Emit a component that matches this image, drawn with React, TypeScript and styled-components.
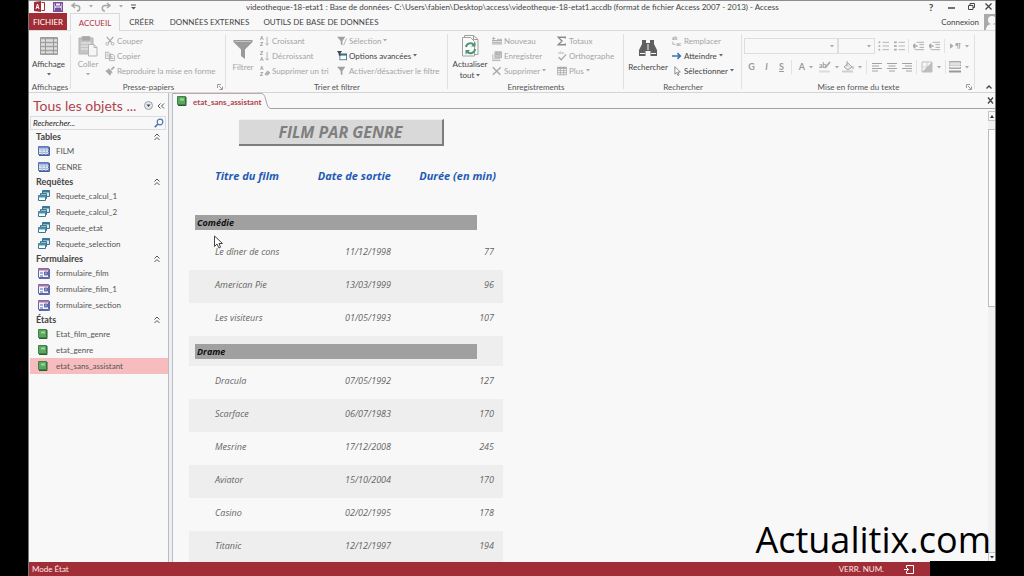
import React from "react";
import styled, { createGlobalStyle, css } from "styled-components";

const Global = createGlobalStyle`
  *, *::before, *::after { box-sizing: border-box; }
  body { margin: 0; background: #000; overflow: hidden; font-family: Lato, "Open Sans", sans-serif; font-size: 8px; line-height: 12px; color: #444; }
  button, input, select { font: inherit; color: inherit; background: none; border: 0; padding: 0; margin: 0; }
  ul, h1, h2 { margin: 0; padding: 0; list-style: none; font-weight: 400; }
  svg { display: block; flex: none; }
`;

const RED = "#a12d37";

const Screen = styled.div`
  position: relative;
  height: 100vh;
  display: flex;
  flex-direction: column;
  padding: 0 29px;
  background: #000;
`;

const Window = styled.div`
  flex: 1;
  min-height: 0;
  display: flex;
  flex-direction: column;
  background: #f8f8f8;
  border-top: 1px solid #8e8e8e;
  box-shadow: -1px 0 0 #777, 1px 0 0 #777;
`;

/* Title bar */
const TitleBar = styled.header`
  display: flex;
  height: 11px;
  align-items: center;
`;
const QuickAccess = styled.div`
  flex: 0 0 217px;
  display: flex;
  align-items: center;
  gap: 8px;
  padding-left: 5px;
`;
const WindowTitle = styled.h1`
  font-size: 8px;
  line-height: 10px;
  white-space: nowrap;
`;
const WindowButtons = styled.div`
  margin-left: auto;
  display: flex;
  align-items: center;
`;
const CaptionButton = styled.button`
  width: 20px;
  height: 11px;
  display: flex;
  align-items: center;
  justify-content: center;
  font-size: 10px;
  line-height: 10px;
  font-weight: 700;
  &:last-child { width: 14px; }
`;

/* Ribbon tabs */
const TabStrip = styled.nav`
  display: flex;
  height: 18px;
  padding-top: 1px;
  font-size: 8px;
`;
const RibbonTab = styled.button<{ $kind?: "file" | "active"; $width: number }>`
  flex: 0 0 ${(p) => p.$width}px;
  height: 17px;
  white-space: nowrap;
  ${(p) => p.$kind === "file" && css`background: ${RED}; color: #fff; margin-right: 3px;`}
  ${(p) =>
    p.$kind === "active" &&
    css`
      height: 18px;
      position: relative;
      background: #f8f8f8;
      color: #b0353f;
      border: 1px solid #d9d9d9;
      border-bottom: 0;
    `}
`;
const Account = styled.div`
  margin-left: auto;
  display: flex;
  align-items: center;
  gap: 5px;
`;
const Avatar = styled.span`
  width: 11px;
  height: 16px;
  background: #a9a9a9;
  overflow: hidden;
`;

/* Ribbon */
const Ribbon = styled.div`
  flex: none;
  display: flex;
  height: 63px;
  border-top: 1px solid #dcdcdc;
  border-bottom: 1px solid #d4d4d4;
`;
const Group = styled.section<{ $width: number }>`
  flex: 0 0 ${(p) => p.$width}px;
  display: flex;
  flex-direction: column;
  padding-top: 2px;
  position: relative;
  &::after {
    content: "";
    position: absolute;
    right: 0;
    top: 3px;
    bottom: 3px;
    border-right: 1px solid #e0e0e0;
  }
`;
const GroupBody = styled.div`
  flex: 1;
  display: flex;
  white-space: nowrap;
`;
const GroupLabel = styled.div`
  display: flex;
  justify-content: center;
  height: 11px;
  color: #555;
`;
const Launcher = styled.button`
  position: absolute;
  right: 3px;
  bottom: 2px;
`;
const BigButton = styled.button<{ $width: number; $dim?: boolean }>`
  flex: 0 0 ${(p) => p.$width}px;
  display: flex;
  flex-direction: column;
  align-items: center;
  padding-top: 2px;
  color: ${(p) => (p.$dim ? "#a4a4a4" : "#444")};
  line-height: 11px;
  & > svg:first-child { height: 22px; margin-bottom: 2px; }
  & > svg:last-child { margin-top: 3px; }
`;
const InlineLabel = styled.span`
  display: flex;
  align-items: center;
  gap: 2px;
`;
const Column = styled.div<{ $width: number }>`
  flex: 0 0 ${(p) => p.$width}px;
  display: flex;
  flex-direction: column;
`;
const SmallButton = styled.button<{ $dim?: boolean }>`
  display: flex;
  align-items: center;
  gap: 2px;
  height: 15px;
  color: ${(p) => (p.$dim ? "#a4a4a4" : "#444")};
  & > svg:first-child { width: 10px; height: 12px; }
`;
const FormatBody = styled.div`
  flex: 1;
  display: flex;
  flex-direction: column;
  gap: 5px;
  padding: 5px 0 0 2px;
`;
const FormatRow = styled.div`
  display: flex;
  align-items: center;
  height: 16px;
  color: #9b9b9b;
`;
const Combo = styled.div<{ $width: number }>`
  flex: 0 0 ${(p) => p.$width}px;
  display: flex;
  align-items: center;
  height: 16px;
  padding-right: 3px;
  border: 1px solid #dedede;
  select { flex: 1; width: 0; appearance: none; opacity: 1; }
`;
const Tool = styled.button<{ $width: number }>`
  flex: 0 0 ${(p) => p.$width}px;
  display: flex;
  align-items: center;
  justify-content: center;
  gap: 4px;
  font-size: 9px;
  font-weight: 700;
`;
const Divider = styled.i<{ $gap: number }>`
  width: 1px;
  height: 14px;
  margin: 0 ${(p) => p.$gap}px;
  background: #e2e2e2;
`;
const Collapse = styled.button`
  margin-left: auto;
  align-self: flex-end;
  padding: 0 3px 3px 0;
`;

/* Work area */
const Work = styled.main`
  flex: 1;
  display: flex;
  min-height: 0;
`;
const NavPane = styled.aside`
  flex: 0 0 139px;
  min-width: 0;
  display: flex;
  flex-direction: column;
`;
const NavTitle = styled.div`
  display: flex;
  align-items: center;
  height: 23px;
  padding: 2px 3px 0 4px;
  gap: 4px;
  h2 { flex: 1; min-width: 0; font-size: 14px; line-height: 20px; color: #b0444e; white-space: nowrap; }
`;
const SearchBox = styled.label`
  display: flex;
  align-items: center;
  height: 14px;
  margin: 0 2px 0 1px;
  border: 1px solid #d8dde4;
  input { flex: 1; width: 0; height: 12px; padding-left: 2px; font-style: italic; outline: 0; }
  input::placeholder { color: #222; opacity: 1; }
  svg { margin-right: 1px; }
`;
const NavHeading = styled.button`
  display: flex;
  width: 100%;
  height: 13px;
  align-items: center;
  justify-content: space-between;
  padding: 0 8px 0 7px;
  font-size: 9px;
  font-weight: 700;
`;
const NavItem = styled.a<{ $selected?: boolean }>`
  display: flex;
  align-items: center;
  height: 16px;
  gap: 6px;
  padding-left: 8px;
  margin-left: 1px;
  color: #555;
  text-decoration: none;
  background: ${(p) => (p.$selected ? "#f7bcbe" : "transparent")};
`;
const Splitter = styled.div`
  flex: 0 0 5px;
  border: solid #b9bcc3;
  border-width: 0 1px;
  background: #eceef2;
`;
const Documents = styled.div`
  flex: 1;
  min-width: 0;
  display: flex;
  flex-direction: column;
`;
const DocTabs = styled.div`
  flex: none;
  display: flex;
  height: 16px;
`;
const DocTab = styled.button`
  display: flex;
  align-items: center;
  gap: 4px;
  padding-left: 4px;
  border-top: 1px solid #b9aca4;
  font-weight: 700;
  color: #b0444e;
`;
const TabRest = styled.div`
  flex: 1;
  display: flex;
  align-items: center;
  justify-content: flex-end;
  border-bottom: 1px solid #a8a29e;
`;
const Viewport = styled.div`
  flex: 1;
  display: flex;
  min-height: 0;
  overflow: hidden;
`;
const Report = styled.article`
  flex: 1;
  padding: 10px 0 0 16px;
  font-family: "Open Sans", "Noto Sans", sans-serif;
  font-style: italic;
`;
const ReportTitle = styled.h2`
  width: 205px;
  height: 27px;
  margin-left: 50px;
  background: #d9d9d9;
  border: solid #7d7d7d;
  border-width: 0 2px 2px 0;
  border-top: 1px solid #f0f0f0;
  font-size: 16px;
  line-height: 24px;
  font-weight: 700;
  text-align: center;
  color: #7f7f7f;
`;
const ReportTable = styled.table`
  width: 314px;
  table-layout: fixed;
  border-collapse: collapse;
  font-size: 9px;
  color: #666;
  th, td { padding: 0 0 4px; text-align: right; font-weight: 400; white-space: nowrap; }
  th:first-child, td:first-child { text-align: left; padding-left: 26px; }
  td:last-child { padding-right: 9px; }
  thead th { height: 61px; padding-bottom: 2px; font-size: 11px; font-weight: 700; color: #1f5bb5; }
  thead th:last-child { padding-right: 7px; }
`;
const FilmRow = styled.tr<{ $shaded: boolean }>`
  height: 33px;
  background: ${(p) => (p.$shaded ? "#eeeeee" : "transparent")};
`;
const GenreRow = styled.tr<{ $shaded: boolean }>`
  height: 30px;
  background: ${(p) => (p.$shaded ? "#eeeeee" : "transparent")};
  && th { padding: 0 26px 0 6px; }
`;
const GenreBar = styled.div`
  height: 15px;
  padding-left: 2px;
  background: #a0a0a0;
  font-size: 9px;
  line-height: 15px;
  font-weight: 700;
  color: #111;
`;
const ScrollBar = styled.div`
  flex: 0 0 7px;
  display: flex;
  flex-direction: column;
  align-items: stretch;
  margin-top: 2px;
  background: #f1f1f1;
`;
const ScrollButton = styled.button`
  flex: none;
  height: 10px;
  display: flex;
  align-items: center;
  justify-content: center;
  border: 1px solid #c4c4c4;
  border-right: 0;
  background: #f8f8f8;
`;
const ScrollTrack = styled.div`
  flex: 1;
  padding-top: 8px;
`;
const ScrollThumb = styled.div`
  height: 42%;
  border: 1px solid #bcbcbc;
  border-right: 0;
  background: #fdfdfd;
`;

/* Status bar */
const StatusBar = styled.footer`
  flex: none;
  display: flex;
  height: 14px;
  align-items: center;
  padding-left: 3px;
  background: ${RED};
  color: #fbe9ea;
`;
const StatusRight = styled.div`
  margin-left: auto;
  display: flex;
  align-items: center;
  gap: 20px;
  padding-right: 16px;
`;
const Cover = styled.div`
  flex: 0 0 66px;
  margin: -1px -1px 0 0;
  align-self: stretch;
  background: #000;
`;

const Watermark = styled.div`
  position: absolute;
  right: 33px;
  bottom: 11px;
  font-family: "Open Sans", "Noto Sans", sans-serif;
  font-size: 36px;
  line-height: 50px;
  color: #000;
`;
const Pointer = styled.svg`
  position: absolute;
  left: 214px;
  top: 235px;
`;

/* Icons */
const S = (p: { w?: number; h?: number; vb?: string; children: React.ReactNode; c?: string }) => (
  <svg width={p.w ?? 12} height={p.h ?? 12} viewBox={p.vb ?? "0 0 12 12"} fill="none" stroke={p.c ?? "#a8a8a8"} strokeWidth="1" aria-hidden="true">
    {p.children}
  </svg>
);
const Arrow = ({ c = "#666" }: { c?: string }) => (
  <svg width="4" height="3" viewBox="0 0 4 3" fill={c} aria-hidden="true"><path d="M0 0h4L2 2.5z" /></svg>
);
const Cut = () => <S><path d="M2 1l6 7M10 1L4 8" strokeWidth="1.4" /><circle cx="2.8" cy="9.4" r="1.6" /><circle cx="9.2" cy="9.4" r="1.6" /></S>;
const Copy = () => <S><path d="M.5 1.500h4l2 2v5.500h-6zM5.500 4h4l2 2v5.500h-6z" fill="#f4f4f4" /><path d="M2 4h2M2 6h3M7 7h2M7 9h3" /></S>;
const Brush = () => <S><path d="M11 1L7.500 4.500" strokeWidth="2" /><path d="M4 3l5 5M1 6l4-2 3 3-2 4z" fill="#a8a8a8" /></S>;
const Sort = ({ a, b, erase }: { a: string; b: string; erase?: boolean }) => (
  <S>
    <g fill="#8f8f8f" stroke="none" fontSize="6" fontWeight="700"><text x="0" y="5">{a}</text><text x="0" y="12">{b}</text></g>
    {erase ? <path d="M6 10l3-4 3 2-3 3z" fill="#b5b5b5" /> : <path d="M8.500 1v10M6.500 9l2 2 2-2" />}
  </S>
);
const FunnelSmall = ({ bolt }: { bolt?: boolean }) => (
  <S><path d="M0 1h10L6.500 6v5l-2-1V6z" fill="#a0a0a0" stroke="none" />{bolt && <path d="M11.500 3L8 11" />}</S>
);
const Options = () => (
  <S c="#3f6f8c"><rect x="3.500" y="3.500" width="8" height="7" fill="#fff" /><path d="M3 4.500h9" strokeWidth="2" /><path d="M0 0h6L4 3v3L2 5V3z" fill="#444" stroke="none" /></S>
);
const NewRec = () => <S><path d="M0 5.500h12M0 7.500h12M0 9.500h12" strokeWidth="1.200" /><path d="M2 1v4M0 3h4" /><path d="M6 4h6" /></S>;
const SaveRec = () => <S><path d="M3.500 1h8v7h-8z" fill="#c6c6c6" /><path d="M5.500 1v3h4V1M0 9.500h10M0 11.500h10" /><path d="M1 4v4" /></S>;
const DeleteX = () => <S><path d="M1 1.500l9 9M10.500 1.500l-9.500 9" strokeWidth="1.700" /></S>;
const Sigma = () => <S c="#8c8c8c"><path d="M10 3V1.500H1.500L6 6l-4.500 4.500H10V9" strokeWidth="1.600" /></S>;
const Spell = () => <S><g fill="#a8a8a8" stroke="none" fontSize="5"><text x="1" y="4">abc</text></g><path d="M2 7.500l3 3 6-6.500" strokeWidth="1.600" /></S>;
const MoreGrid = () => <S><path d="M.5 1.500h11v9H.5z" /><path d="M.5 2.500h11" strokeWidth="2" /><path d="M.5 5.500h11M.5 8h11M4 1v10M8 1v10" /></S>;
const Replace = () => <S><g fill="#a0a0a0" stroke="none" fontSize="6" fontWeight="700"><text x="0" y="5">ab</text><text x="5" y="11.500">ac</text></g><path d="M1 7v3h3" /></S>;
const GoTo = () => <S c="#3c73b5"><path d="M0 6h10M6.500 2.500L10 6l-3.500 3.500" strokeWidth="1.900" /></S>;
const SelectCursor = () => <S c="#777"><path d="M3.500.8v9l2-2 1.500 3.500 1.500-.7L7 7.300h3z" fill="#fff" /></S>;

const ViewIcon = () => (
  <S w={18} h={20} vb="0 0 18 20" c="#9a9a9a">
    <path d="M.5 1.500h17v17H.5z" fill="#dedede" />
    <path d="M1 2.500h16M1 6.500h16M1 10.500h16M1 14.500h16M1 18h16" strokeWidth="1.500" stroke="#a2a2a2" /><path d="M5.500 1v18M13.500 1v18" />
  </S>
);
const PasteIcon = () => (
  <S w={20} h={22} vb="0 0 20 22" c="#b4b4b4">
    <path d="M1 3h14v16H1z" fill="#c4c4c4" /><path d="M4 1.500h8v4H4z" fill="#a8a8a8" /><path d="M3 8h10M3 11h7M3 14h7" stroke="#eee" />
    <path d="M10.500 9.500h5.500l3 3v8.500h-8.500z" fill="#f6f6f6" /><path d="M16 9.500v3h3" />
  </S>
);
const FilterIcon = () => (
  <S w={20} h={22} vb="0 0 20 22"><path d="M.5 2h19v2L12 11.500V21l-4-3v-6.500L.5 4z" fill="#9a9a9a" stroke="none" /><path d="M2 3.500h16" stroke="#c4c4c4" /></S>
);
const RefreshIcon = () => (
  <S w={18} h={22} vb="0 0 18 22" c="#a0a0a0">
    <path d="M3.500 3.500V.5h9l4.500 4v15h-3" /><path d="M1.500 2.500h8l4 4v14.500h-12z" fill="#fbfbfb" /><path d="M12.500.5v4H17" />
    <g stroke="#4c9474" strokeWidth="2"><path d="M5 12a4.500 4.500 0 0 1 8-2M14 14a4.500 4.500 0 0 1-8 2.500" /></g>
    <path d="M14.500 7v4.500H10zM4.500 19.500V15H9z" fill="#4c9474" stroke="none" />
  </S>
);
const Binoculars = () => (
  <S w={20} h={20} vb="0 0 20 20"><path d="M4 1h4v3h4V1h4v4l3 6v6h-6.500v-5h-5v5H1v-6l3-6z" fill="#5f5f5f" stroke="none" /><path d="M2 14.500h5M13 14.500h5M10 5v6" stroke="#f8f8f8" /></S>
);

const Bullets = ({ round }: { round?: boolean }) => (
  <S w={11} h={12}><path d="M5 2h7M5 6h7M5 10h7" stroke="#b0b0b0" /><g fill="#b0b0b0" stroke="none">{round ? [2, 6, 10].map((y) => <circle key={y} cx="1.500" cy={y} r="1.100" />) : [2, 6, 10].map((y) => <path key={y} d={`M0 ${y - 1}h3v2H0z`} />)}</g></S>
);
const Indent = () => <S w={11}><path d="M0 6h5M2.500 3.500L0 6l2.500 2.500" strokeWidth="1.600" /><path d="M4 2h8M7 4.500h5M7 7.500h5M2 10h10" /></S>;
const Direction = () => <S w={11}><path d="M0 3v6l4-3z" fill="#aaa" stroke="none" /><path d="M8.500 3v6M10.500 3v6M6.500 3.500h5" /><path d="M6 3h2.500v3H6z" fill="#aaa" stroke="none" /></S>;
const Align = ({ kind }: { kind: "l" | "c" | "r" }) => (
  <S w={10} h={10} vb="0 0 10 10" c="#a3a3a3">
    <path d={{ l: "M0 1.500h10M0 4h7M0 6.500h10M0 9h6", c: "M0 1.500h10M1.500 4h7M0 6.500h10M2 9h6", r: "M0 1.500h10M3 4h7M0 6.500h10M4 9h6" }[kind]} />
  </S>
);
const Marker = () => <S><text x="0" y="7" fontSize="7" fontWeight="700" fill="#999" stroke="none">ab</text><path d="M11 1L6 7" strokeWidth="1.800" /><path d="M0 10.500h11" strokeWidth="2" stroke="#ddd" /></S>;
const Bucket = () => <S><path d="M2 6l4-4 4 4-4 3z" fill="#e6e6e6" /><path d="M5 0v5M11 5v3" /><path d="M0 10.500h11" strokeWidth="2" stroke="#cfcfcf" /></S>;
const BgShape = () => <S><path d="M1 1h10v10H1z" stroke="#c0c0c0" /><path d="M1 6h10M6 1v10" stroke="#d0d0d0" /><path d="M1 11L11 1v10z" fill="#bdbdbd" stroke="none" /></S>;
const AltRow = () => <S><path d="M.5.5h11v7H.5z" fill="#d2d2d2" /><path d="M0 3h12M0 5.500h12" stroke="#eee" /><path d="M0 10.500h12" strokeWidth="2" stroke="#999" /></S>;

const LaunchIcon = () => <S w={6} h={6} vb="0 0 6 6" c="#999"><path d="M.5 4V.5H4M2 2l3 3M5.500 2.500v3h-3" /></S>;
const Chevrons = () => <S w={6} h={8} vb="0 0 6 8" c="#555"><path d="M.5 3.500L3 1l2.500 2.500M.5 7L3 4.500 5.500 7" /></S>;

type Kind = "table" | "query" | "form" | "report";
const ObjectIcon = ({ kind }: { kind: Kind }) => {
  if (kind === "table")
    return <S w={12} h={10} vb="0 0 12 10" c="#5470ad"><path d="M.5.5h10v8H.5z" fill="#e3ebf8" /><path d="M.5 1.500h10" strokeWidth="2" stroke="#6f8ac4" /><path d="M1 4h10M1 6.500h10M4 2v7M7.500 2v7" stroke="#a9bce0" /><path d="M11.500 1v8.500H1" stroke="#4a5f96" /></S>;
  if (kind === "query")
    return <S c="#3c7894"><path d="M4.500.5h7v6h-7z" fill="#d5eaf3" /><path d="M4.500 1.500h7" strokeWidth="2" /><path d="M2.500 3.500h6v5h-6z" fill="#9fb7c6" /><path d="M.5 5.500h7v5h-7z" fill="#fff" /><path d="M.5 6.500h7" strokeWidth="2" stroke="#4796ad" /></S>;
  if (kind === "form")
    return <S w={12} h={11} vb="0 0 12 11" c="#5d66a8"><path d="M.5.500h10v9h-10z" fill="#f2f3fb" /><path d="M0 1.500h11" strokeWidth="2" stroke="#b0709b" /><path d="M2 5h3" /><path d="M6.500 4h3v3h-3z" fill="#8e99d0" /><path d="M2 8h3M11.500 1v9.500H1" /></S>;
  return <S w={12} h={11} vb="0 0 12 11" c="#3d8344"><path d="M.5.5h8v8h-8z" fill="#5aa85d" /><path d="M3 2.500h4v2H3z" fill="#a5d3a1" stroke="none" /><path d="M9 1v8.500H1" stroke="#2c5a33" /></S>;
};

const navigation: { title: string; kind: Kind; items: string[] }[] = [
  { title: "Tables", kind: "table", items: ["FILM", "GENRE"] },
  { title: "Requêtes", kind: "query", items: ["Requete_calcul_1", "Requete_calcul_2", "Requete_etat", "Requete_selection"] },
  { title: "Formulaires", kind: "form", items: ["formulaire_film", "formulaire_film_1", "formulaire_section"] },
  { title: "États", kind: "report", items: ["Etat_film_genre", "etat_genre", "etat_sans_assistant"] },
];

const genres = [
  {
    name: "Comédie",
    shaded: false,
    films: [["Le dîner de cons", "11/12/1998", 77], ["American Pie", "13/03/1999", 96], ["Les visiteurs", "01/05/1993", 107]],
  },
  {
    name: "Drame",
    shaded: true,
    films: [
      ["Dracula", "07/05/1992", 127],
      ["Scarface", "06/07/1983", 170],
      ["Mesrine", "17/12/2008", 245],
      ["Aviator", "15/10/2004", 170],
      ["Casino", "02/02/1995", 178],
      ["Titanic", "12/12/1997", 194],
    ],
  },
];

export default function App() {
  return (
    <Screen>
      <Global />
      <Window>
        <TitleBar>
          <QuickAccess>
            <svg width="11" height="11" viewBox="0 0 11 11"><path d="M0 1l7-1v11l-7-1z" fill={RED} /><path d="M7.500 1.500h3v8h-3" fill="#fff" stroke={RED} /><path d="M2 8l1.500-5L5 8M2.500 6.500h2" stroke="#fff" fill="none" /></svg>
            <S w={10} h={10} vb="0 0 10 10" c="#7a4e9e"><path d="M.7.7h8.600v8.600H.7z" strokeWidth="1.400" /><path d="M2.500 1v3h5V1" /><path d="M2.500 6h5v3h-5z" fill="#7a4e9e" /></S>
            <S w={10} h={10} vb="0 0 10 10"><path d="M4 1L1 3.500 4 6M1 3.500h5a2.700 2.700 0 0 1 0 5.500" strokeWidth="1.500" /></S>
            <Arrow c="#aaa" />
            <S w={10} h={10} vb="0 0 10 10"><path d="M6 1l3 2.500L6 6M9 3.500H4A2.700 2.700 0 0 0 4 9" strokeWidth="1.500" /></S>
            <Arrow c="#aaa" />
            <S w={5} h={6} vb="0 0 5 6" c="#555"><path d="M0 1h5" /><path d="M0 3h5L2.500 5.500z" fill="#555" stroke="none" /></S>
          </QuickAccess>
          <WindowTitle>videotheque-18-etat1 : Base de données- C:\Users\fabien\Desktop\access\videotheque-18-etat1.accdb (format de fichier Access 2007 - 2013) - Access</WindowTitle>
          <WindowButtons>
            <CaptionButton>?</CaptionButton>
            <CaptionButton aria-label="Réduire"><S w={7} h={7} vb="0 0 7 7" c="#444"><path d="M0 5h7" strokeWidth="1.500" /></S></CaptionButton>
            <CaptionButton aria-label="Restaurer"><S w={7} h={7} vb="0 0 7 7" c="#444"><path d="M.5 2.500h4.500v4H.5zM2 2.500v-2h4.500v4H5" /></S></CaptionButton>
            <CaptionButton aria-label="Fermer"><S w={7} h={7} vb="0 0 7 7" c="#444"><path d="M.5.5l6 6M6.500.5l-6 6" strokeWidth="1.300" /></S></CaptionButton>
          </WindowButtons>
        </TitleBar>

        <TabStrip>
          <RibbonTab $kind="file" $width={38}>FICHIER</RibbonTab>
          <RibbonTab $kind="active" $width={50}>ACCUEIL</RibbonTab>
          <RibbonTab $width={43}>CRÉER</RibbonTab>
          <RibbonTab $width={93}>DONNÉES EXTERNES</RibbonTab>
          <RibbonTab $width={130}>OUTILS DE BASE DE DONNÉES</RibbonTab>
          <Account>
            Connexion
            <Avatar><svg width="11" height="16" viewBox="0 0 11 16" fill="#f8f8f8"><circle cx="8" cy="6" r="4" /><path d="M2 16c0-8 12-8 12 0z" /></svg></Avatar>
          </Account>
        </TabStrip>

        <Ribbon>
          <Group $width={42}>
            <GroupBody><BigButton $width={39}><ViewIcon />Affichage<Arrow /></BigButton></GroupBody>
            <GroupLabel>Affichages</GroupLabel>
          </Group>
          <Group $width={155}>
            <GroupBody>
              <BigButton $width={34} $dim><PasteIcon />Coller<Arrow c="#aaa" /></BigButton>
              <Column $width={118}>
                <SmallButton $dim><Cut />Couper</SmallButton>
                <SmallButton $dim><Copy />Copier</SmallButton>
                <SmallButton $dim><Brush />Reproduire la mise en forme</SmallButton>
              </Column>
            </GroupBody>
            <GroupLabel>Presse-papiers</GroupLabel>
            <Launcher aria-label="Presse-papiers"><LaunchIcon /></Launcher>
          </Group>
          <Group $width={222}>
            <GroupBody>
              <BigButton $width={34} $dim><FilterIcon />Filtrer</BigButton>
              <Column $width={77}>
                <SmallButton $dim><Sort a="A" b="Z" />Croissant</SmallButton>
                <SmallButton $dim><Sort a="Z" b="A" />Décroissant</SmallButton>
                <SmallButton $dim><Sort a="A" b="Z" erase />Supprimer un tri</SmallButton>
              </Column>
              <Column $width={110}>
                <SmallButton $dim><FunnelSmall bolt />Sélection <Arrow c="#aaa" /></SmallButton>
                <SmallButton><Options />Options avancées <Arrow /></SmallButton>
                <SmallButton $dim><FunnelSmall />Activer/désactiver le filtre</SmallButton>
              </Column>
            </GroupBody>
            <GroupLabel>Trier et filtrer</GroupLabel>
          </Group>
          <Group $width={176}>
            <GroupBody>
              <BigButton $width={44}><RefreshIcon />Actualiser<InlineLabel>tout <Arrow /></InlineLabel></BigButton>
              <Column $width={65}>
                <SmallButton $dim><NewRec />Nouveau</SmallButton>
                <SmallButton $dim><SaveRec />Enregistrer</SmallButton>
                <SmallButton $dim><DeleteX />Supprimer <Arrow c="#aaa" /></SmallButton>
              </Column>
              <Column $width={66}>
                <SmallButton $dim><Sigma />Totaux</SmallButton>
                <SmallButton $dim><Spell />Orthographe</SmallButton>
                <SmallButton $dim><MoreGrid />Plus <Arrow c="#aaa" /></SmallButton>
              </Column>
            </GroupBody>
            <GroupLabel>Enregistrements</GroupLabel>
          </Group>
          <Group $width={118}>
            <GroupBody>
              <BigButton $width={48}><Binoculars />Rechercher</BigButton>
              <Column $width={68}>
                <SmallButton $dim><Replace />Remplacer</SmallButton>
                <SmallButton><GoTo />Atteindre <Arrow /></SmallButton>
                <SmallButton><SelectCursor />Sélectionner <Arrow /></SmallButton>
              </Column>
            </GroupBody>
            <GroupLabel>Rechercher</GroupLabel>
          </Group>
          <Group $width={233}>
            <FormatBody>
              <FormatRow>
                <Combo $width={94}><select aria-label="Police" disabled /><Arrow c="#aaa" /></Combo>
                <Combo $width={37}><select aria-label="Taille" disabled /><Arrow c="#aaa" /></Combo>
                <Tool $width={16} aria-label="Puces"><Bullets round /></Tool>
                <Tool $width={16} aria-label="Numérotation"><Bullets /></Tool>
                <Divider $gap={1} />
                <Tool $width={16} aria-label="Diminuer le retrait"><Indent /></Tool>
                <Tool $width={16} aria-label="Augmenter le retrait"><Indent /></Tool>
                <Divider $gap={2} />
                <Tool $width={24} aria-label="Sens du texte"><Direction /><Arrow c="#aaa" /></Tool>
              </FormatRow>
              <FormatRow>
                <Tool $width={15}>G</Tool>
                <Tool $width={15}><i>I</i></Tool>
                <Tool $width={15}><u>S</u></Tool>
                <Divider $gap={2} />
                <Tool $width={24}>A<Arrow c="#aaa" /></Tool>
                <Tool $width={22} aria-label="Surlignage"><Marker /><Arrow c="#aaa" /></Tool>
                <Tool $width={24} aria-label="Remplissage"><Bucket /><Arrow c="#aaa" /></Tool>
                <Divider $gap={2} />
                <Tool $width={15} aria-label="Gauche"><Align kind="l" /></Tool>
                <Tool $width={15} aria-label="Centrer"><Align kind="c" /></Tool>
                <Tool $width={15} aria-label="Droite"><Align kind="r" /></Tool>
                <Divider $gap={2} />
                <Tool $width={24} aria-label="Quadrillage"><BgShape /><Arrow c="#aaa" /></Tool>
                <Divider $gap={2} />
                <Tool $width={22} aria-label="Couleur des lignes"><AltRow /><Arrow c="#aaa" /></Tool>
              </FormatRow>
            </FormatBody>
            <GroupLabel>Mise en forme du texte</GroupLabel>
            <Launcher aria-label="Mise en forme du texte"><LaunchIcon /></Launcher>
          </Group>
          <Collapse aria-label="Réduire le ruban"><S w={6} h={4} vb="0 0 6 4" c="#444"><path d="M.5 3.500L3 1l2.500 2.500" strokeWidth="1.300" /></S></Collapse>
        </Ribbon>

        <Work>
          <NavPane>
            <NavTitle>
              <h2>Tous les objets ...</h2>
              <S w={9} h={9} vb="0 0 9 9" c="#9aa0ad"><circle cx="4.500" cy="4.500" r="4" fill="#e4e8ef" /><path d="M2.500 3.500h4l-2 2.500z" fill="#444" stroke="none" /></S>
              <S w={8} h={6} vb="0 0 8 6" c="#555"><path d="M3.500.5L1 3l2.500 2.500M7 .5L4.500 3 7 5.500" /></S>
            </NavTitle>
            <SearchBox>
              <input placeholder="Rechercher..." aria-label="Rechercher" />
              <S w={10} h={10} vb="0 0 10 10" c="#4a78b0"><circle cx="6" cy="4" r="2.800" strokeWidth="1.200" /><path d="M4 6L.8 9.200" strokeWidth="1.700" /></S>
            </SearchBox>
            {navigation.map((group) => (
              <section key={group.title}>
                <NavHeading>{group.title}<Chevrons /></NavHeading>
                <ul>
                  {group.items.map((item) => (
                    <li key={item}>
                      <NavItem href="#" $selected={item === "etat_sans_assistant"}><ObjectIcon kind={group.kind} />{item}</NavItem>
                    </li>
                  ))}
                </ul>
              </section>
            ))}
          </NavPane>
          <Splitter />
          <Documents>
            <DocTabs>
              <DocTab><ObjectIcon kind="report" />etat_sans_assistant</DocTab>
              <S w={10} h={16} vb="0 0 10 16" c="#a8a29e"><path d="M0 .5c3 0 4 3 5 7s2 8 5 8" /></S>
              <TabRest>
                <button aria-label="Fermer l'état"><S w={8} h={7} vb="0 0 8 7" c="#444"><path d="M1 .5l5 6M6 .5l-5 6" strokeWidth="1.300" /></S></button>
              </TabRest>
            </DocTabs>
            <Viewport>
              <Report>
                <ReportTitle>FILM PAR GENRE</ReportTitle>
                <ReportTable>
                  <colgroup><col width="111" /><col width="91" /><col width="112" /></colgroup>
                  <thead><tr><th>Titre du film</th><th>Date de sortie</th><th>Durée (en min)</th></tr></thead>
                  {genres.map((g) => (
                    <tbody key={g.name}>
                      <GenreRow $shaded={g.shaded}><th colSpan={3}><GenreBar>{g.name}</GenreBar></th></GenreRow>
                      {g.films.map(([title, date, minutes], i) => (
                        <FilmRow key={title} $shaded={i % 2 === 1}><td>{title}</td><td>{date}</td><td>{minutes}</td></FilmRow>
                      ))}
                    </tbody>
                  ))}
                </ReportTable>
              </Report>
              <ScrollBar>
                <ScrollButton aria-label="Haut"><S w={4} h={3} vb="0 0 4 3"><path d="M0 3h4L2 0z" fill="#333" stroke="none" /></S></ScrollButton>
                <ScrollTrack><ScrollThumb /></ScrollTrack>
                <ScrollButton aria-label="Bas"><Arrow c="#333" /></ScrollButton>
              </ScrollBar>
            </Viewport>
          </Documents>
        </Work>

        <StatusBar>
          Mode État
          <StatusRight>
            VERR. NUM.
            <S w={10} h={9} vb="0 0 10 9" c="#fff"><path d="M2.500.5h7v8h-7V6M2.500 3V.5M0 4.500h5M3.500 3v3" /></S>
          </StatusRight>
          <Cover />
        </StatusBar>
      </Window>
      <Watermark>Actualitix.com</Watermark>
      <Pointer width="9" height="14" viewBox="0 0 9 14" fill="#fff" stroke="#444" aria-hidden="true"><path d="M.5 1v10.500L3 9l2 4 1.500-.8L5 8.500h3.500z" /></Pointer>
    </Screen>
  );
}
